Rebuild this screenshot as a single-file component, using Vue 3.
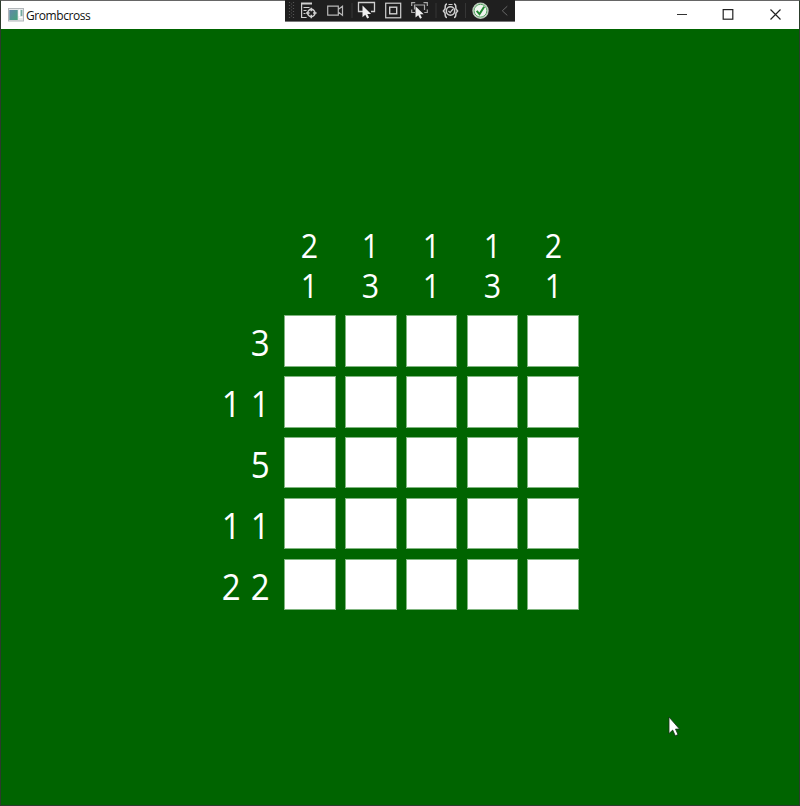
<script setup>
const columns = [[2, 1], [1, 3], [1, 1], [1, 3], [2, 1]]
const rows = [[3], [1, 1], [5], [1, 1], [2, 2]]
</script>

<template>
  <div class="window">
    <header class="titlebar">
      <svg class="app-icon" width="16" height="14" viewBox="0 0 16 14">
        <defs>
          <linearGradient id="pane" x1="0" y1="0" x2="1" y2="1">
            <stop offset="0" stop-color="#6386a8" />
            <stop offset="1" stop-color="#46a37c" />
          </linearGradient>
        </defs>
        <rect x=".5" y=".5" width="15" height="12.5" fill="#e6e8e9" stroke="#b2b7ba" />
        <rect x="1.3" y="2" width="8.4" height="10" fill="url(#pane)" />
        <rect x="11" y="2" width="3.4" height="6" fill="#76aaa0" />
        <path d="M11 2h1v6h-1zM11 9.5h3.5" fill="#fff" stroke="#fff" />
      </svg>
      <h1 class="title">Grombcross</h1>
      <div class="controls">
        <svg width="47" height="28" viewBox="0 0 47 28"><path d="M18 13.5h10" stroke="#333" fill="none" /></svg>
        <svg width="47" height="28" viewBox="0 0 47 28"><rect x="17.2" y="8.6" width="9.6" height="9.6" stroke="#222" stroke-width="1.2" fill="none" /></svg>
        <svg width="46" height="28" viewBox="0 0 46 28"><path d="M17.5 8.5l10 10M27.5 8.5l-10 10" stroke="#222" stroke-width="1.2" fill="none" /></svg>
      </div>
    </header>

    <div class="debugbar">
      <svg width="230" height="22" viewBox="0 0 230 22" fill="none" stroke="#d0d0d0" stroke-width="1.2">
        <path d="M4.5 2v17M8.5 2v17" stroke="#555" stroke-dasharray="1 2" />
        <path d="M6.5 3.5v15" stroke="#555" stroke-dasharray="1 2" />
        <g>
          <path d="M16 3.5h11" stroke-width="2" />
          <path d="M16.6 3v14.5h5M18.5 7.5h6M18.5 10.5h3M18.5 13.5h2" />
          <circle cx="26.3" cy="13" r="3.6" stroke-width="1.6" />
          <path d="M26.3 7.7v3.6M26.3 14.7v3.6M21 13h3.6M28 13h3.6" stroke-width="1.5" />
        </g>
        <path d="M42.7 6.2h10.6v9H42.7zM53.5 9.3l4-3v9l-4-3" stroke="#b8b8b8" />
        <path d="M67 3v15M151 3v15M180.5 3v15" stroke="#363636" stroke-width="1" />
        <path d="M78 11.5h-4.5v-9h16v9H86" stroke-width="1.3" />
        <path d="M77.5 5.5v11.8l2.8-2.5 1.9 3.7 1.9-1-1.8-3.5h3.8z" fill="#eee" stroke="none" />
        <rect x="100.7" y="3.2" width="15" height="14.6" />
        <rect x="104.7" y="7.2" width="7" height="6.6" stroke-width="1.4" />
        <path d="M126.7 6V2.7h3.5M138.5 2.7h3.8V6M142.3 9.5v3h-3M130 12.5h-3.3v-3M129.5 9.5V5h10v5" stroke="#aaa" />
        <path d="M130.5 6.2v11.4l2.7-2.4 1.9 3.5 1.8-.9-1.8-3.5h3.6z" fill="#eee" stroke="none" />
        <path d="M162 4c-2.5 0-1.5 3-2 5l-1.6 2 1.6 2c.5 2-.5 4.5 2 4.5M169 4c2.5 0 1.5 3 2 5l1.6 2-1.6 2c-.5 2 .5 4.5-2 4.5" stroke-width="1.5" />
        <circle cx="165.5" cy="11" r="4.2" stroke-width="1.5" />
        <path d="M163.4 10.8l1.7 1.8 2.9-3.6M163.5 4.5h4" />
        <circle cx="195.5" cy="10.7" r="7.6" fill="#eef5ee" stroke="#b9c8b9" />
        <circle cx="195.5" cy="10.7" r="6.4" stroke="#55a362" stroke-width="1" />
        <path d="M191.7 10.8l2.8 3.3 4.7-7.3" stroke="#218832" stroke-width="2" />
        <path d="M222.3 6.2l-5 4.6 5 4.6" stroke="#686868" stroke-width="1" />
      </svg>
    </div>

    <main class="field">
      <div class="column-clues">
        <div v-for="(clue, i) in columns" :key="i" class="column-clue">
          <span v-for="(n, j) in clue" :key="j" class="digit">{{ n }}</span>
        </div>
      </div>
      <div v-for="(clue, r) in rows" :key="r" class="row">
        <div class="row-clue">
          <span v-for="(n, j) in clue" :key="j" class="digit">{{ n }}</span>
        </div>
        <div class="cells">
          <button v-for="c in 5" :key="c" class="cell" type="button"></button>
        </div>
      </div>
    </main>

    <svg class="pointer" width="14" height="22" viewBox="0 0 14 22">
      <path d="M1 1v16.6l3.7-3.5 2.6 5.7 2.7-1.2-2.5-5.5h4z" fill="#fff" stroke="#16301a" stroke-width=".8" />
    </svg>
  </div>
</template>

<style>
body {
  margin: 0;
  overflow: hidden;
}
</style>

<style scoped>
.window {
  position: relative;
  box-sizing: border-box;
  width: 800px;
  height: 806px;
  display: flex;
  flex-direction: column;
  border: 1px solid #2c3c2c;
  border-top-color: #666;
  background: #006400;
  font-family: "Open Sans", "Noto Sans", sans-serif;
}
.titlebar {
  flex: none;
  height: 28px;
  display: flex;
  align-items: center;
  padding-left: 7px;
  background: #fff;
}
.app-icon {
  flex: none;
}
.title {
  margin: 0 0 0 2px;
  font-size: 12px;
  font-weight: 400;
  line-height: 29px;
  letter-spacing: -0.42px;
  color: #111;
}
.controls {
  display: flex;
  margin-left: auto;
}
.debugbar {
  position: absolute;
  top: -1px;
  left: 284px;
  height: 21px;
  overflow: hidden;
  background: #1f1f1f;
  border-bottom: 1px solid #777;
}
.debugbar svg {
  display: block;
}
.field {
  padding: 196.5px 0 0 209px;
  color: #fff;
}
.column-clues {
  display: flex;
  gap: 9.2px;
  height: 89.5px;
  padding-left: 74px;
}
.column-clue {
  width: 51.7px;
  display: flex;
  flex-direction: column;
  align-items: center;
  font-size: 33px;
  line-height: 40.5px;
}
.row {
  display: flex;
  height: 51.7px;
  margin-bottom: 9.2px;
}
.row-clue {
  width: 60.6px;
  margin-right: 13.4px;
  display: flex;
  justify-content: flex-end;
  gap: 8.2px;
  font-size: 36px;
  line-height: 55px;
}
.digit {
  display: block;
  transform: scaleX(0.92);
}
.cells {
  display: flex;
  gap: 9.2px;
}
.cell {
  box-sizing: border-box;
  width: 51.7px;
  height: 51.7px;
  padding: 0;
  border: 1px solid #80b580;
  border-radius: 0;
  background: #fff;
}
.pointer {
  position: absolute;
  left: 666.5px;
  top: 715px;
}
</style>
